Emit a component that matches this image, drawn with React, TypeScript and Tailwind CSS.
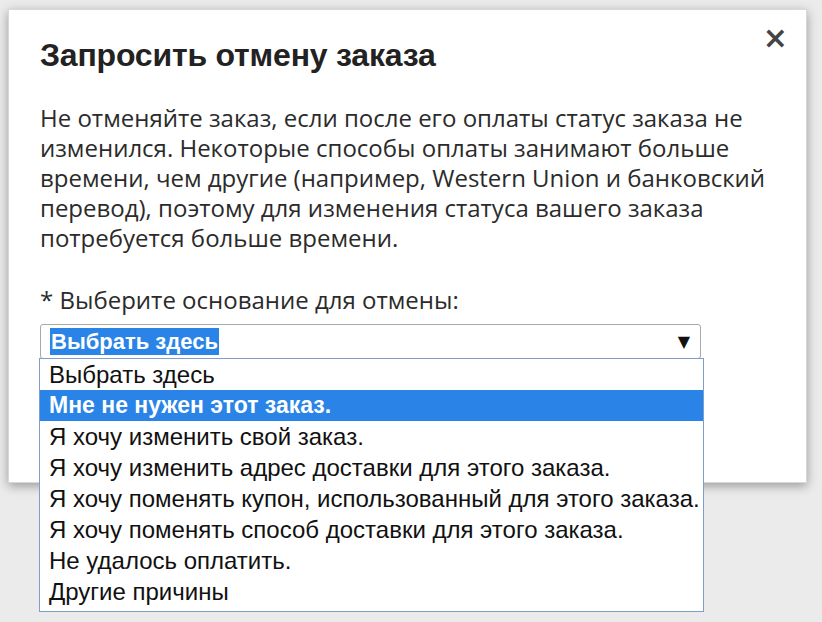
import { useState } from "react"

const reasons = [
  "Выбрать здесь",
  "Мне не нужен этот заказ.",
  "Я хочу изменить свой заказ.",
  "Я хочу изменить адрес доставки для этого заказа.",
  "Я хочу поменять купон, использованный для этого заказа.",
  "Я хочу поменять способ доставки для этого заказа.",
  "Не удалось оплатить.",
  "Другие причины",
]

const notice = [
  "Не отменяйте заказ, если после его оплаты статус заказа не",
  "изменился. Некоторые способы оплаты занимают больше",
  "времени, чем другие (например, Western Union и банковский",
  "перевод), поэтому для изменения статуса вашего заказа",
  "потребуется больше времени.",
]

export default function App() {
  const [active, setActive] = useState(1)

  return (
    <div className="w-[822px] h-[622px] overflow-hidden bg-[#ebebeb] pt-[9px] pl-[8px]">
      {/* Modal */}
      <div className="w-[799px] h-[474px] bg-white shadow-[0_3px_10px_rgba(0,0,0,0.35)] border border-[#d8d8d8] pl-[31px] pr-[20px] pt-[25px]">
        <div className="flex items-start justify-between">
          <h2 className="font-['Liberation_Sans',Arial,sans-serif] text-[32px] leading-[40px] font-bold text-[#222] tracking-[-0.2px]">
            Запросить отмену заказа
          </h2>
          <button className="mt-[-13px] mr-[-2px] text-[#444] text-[30px] leading-[32px] font-bold font-['DejaVu_Sans',sans-serif]">
            ×
          </button>
        </div>

        <p className="mt-[28px] font-['Open_Sans',sans-serif] text-[24px] leading-[30px] text-[#2b2b2b] whitespace-nowrap">
          {notice.map((line) => (
            <span key={line} className="block">
              {line}
            </span>
          ))}
        </p>

        <div className="mt-[32px] font-['Open_Sans',sans-serif] text-[24px] leading-[30px] text-[#2b2b2b]">
          * Выберите основание для отмены:
        </div>

        <div className="relative mt-[9px] w-[661px]">
          <div className="h-[35px] border border-[#a9a9a9] rounded-[3px] bg-white flex items-center justify-between pl-[9px] pr-[10px]">
            <span className="bg-[#2a84e8] text-white font-['Liberation_Sans',Arial,sans-serif] font-bold text-[22px] leading-[27px] px-[1px]">
              Выбрать здесь
            </span>
            <span className="text-[#111] text-[16px] font-['DejaVu_Sans',sans-serif]">▼</span>
          </div>

          {/* Open list */}
          <ul className="absolute left-[-1px] top-[34px] w-[665px] bg-white border border-[#7f9dc9] pb-[4px] font-['Liberation_Sans',Arial,sans-serif] text-[24px] leading-[31px] text-[#111] z-10">
            {reasons.map((r, i) => (
              <li
                key={r}
                onMouseEnter={() => setActive(i)}
                className={`pl-[9px] whitespace-nowrap ${i === active ? "bg-[#2a84e8] text-white font-bold text-[23px]" : ""}`}
              >
                {r}
              </li>
            ))}
          </ul>
        </div>
      </div>
    </div>
  )
}
